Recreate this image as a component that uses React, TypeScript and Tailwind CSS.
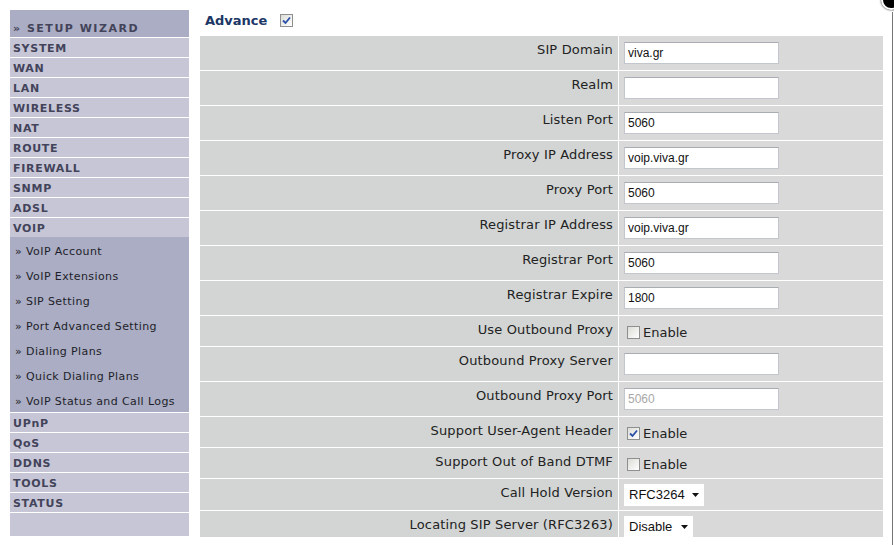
import React from 'react';

const verdana = { fontFamily: '"DejaVu Sans", Verdana, sans-serif' };
const arial = { fontFamily: '"Liberation Sans", Arial, sans-serif' };

const topMenu = ['SYSTEM', 'WAN', 'LAN', 'WIRELESS', 'NAT', 'ROUTE', 'FIREWALL', 'SNMP', 'ADSL', 'VOIP'];
const voipMenu = [
  'VoIP Account',
  'VoIP Extensions',
  'SIP Setting',
  'Port Advanced Setting',
  'Dialing Plans',
  'Quick Dialing Plans',
  'VoIP Status and Call Logs',
];
const bottomMenu = ['UPnP', 'QoS', 'DDNS', 'TOOLS', 'STATUS'];

type Row =
  | { label: string; kind: 'input'; value: string; disabled?: boolean }
  | { label: string; kind: 'check'; checked: boolean }
  | { label: string; kind: 'select'; value: string; width: string; h: string };

const rows: Row[] = [
  { label: 'SIP Domain', kind: 'input', value: 'viva.gr' },
  { label: 'Realm', kind: 'input', value: '' },
  { label: 'Listen Port', kind: 'input', value: '5060' },
  { label: 'Proxy IP Address', kind: 'input', value: 'voip.viva.gr' },
  { label: 'Proxy Port', kind: 'input', value: '5060' },
  { label: 'Registrar IP Address', kind: 'input', value: 'voip.viva.gr' },
  { label: 'Registrar Port', kind: 'input', value: '5060' },
  { label: 'Registrar Expire', kind: 'input', value: '1800' },
  { label: 'Use Outbound Proxy', kind: 'check', checked: false },
  { label: 'Outbound Proxy Server', kind: 'input', value: '' },
  { label: 'Outbound Proxy Port', kind: 'input', value: '5060', disabled: true },
  { label: 'Support User-Agent Header', kind: 'check', checked: true },
  { label: 'Support Out of Band DTMF', kind: 'check', checked: false },
  { label: 'Call Hold Version', kind: 'select', value: 'RFC3264', width: 'w-[80px]', h: 'h-[31px]' },
  { label: 'Locating SIP Server (RFC3263)', kind: 'select', value: 'Disable', width: 'w-[69px]', h: 'h-[26px]' },
];

const CheckBox = ({ checked }: { checked: boolean }) => (
  <span className="inline-flex w-[13px] h-[13px] border border-[#8e8f8f] bg-gradient-to-br from-[#dcdcd7] to-[#ffffff] items-center justify-center">
    {checked && (
      <svg width="9" height="9" viewBox="0 0 9 9">
        <path d="M1 4.5 L3.5 7 L8 1.5" fill="none" stroke="#2a4fa8" strokeWidth="1.8" />
      </svg>
    )}
  </span>
);

const Field = ({ row }: { row: Row }) => {
  if (row.kind === 'input') {
    return (
      <div className="h-[34px] flex items-center">
        <div
          className={`w-[155px] h-[22px] bg-white border border-[#c3c6cc] border-t-[#a9acb2] flex items-center pl-[3px] text-[12px] ${
            row.disabled ? 'text-[#a8a8a8]' : 'text-[#111]'
          }`}
          style={arial}
        >
          {row.value}
        </div>
      </div>
    );
  }
  if (row.kind === 'check') {
    return (
      <div className="h-[30px] flex items-center pt-[3px] gap-[3px]">
        <span className="ml-[3px] flex"><CheckBox checked={row.checked} /></span>
        <span className="text-[13px] text-[#222] leading-[16px]" style={verdana}>Enable</span>
      </div>
    );
  }
  return (
    <div className={`${row.h} pt-[5px]`}>
      <div
        className={`${row.width} h-[22px] bg-white flex items-center justify-between pl-[5px] pr-[5px] text-[13px] text-[#111]`}
        style={arial}
      >
        <span>{row.value}</span>
        <svg width="7" height="4" viewBox="0 0 7 4">
          <path d="M0 0 H7 L3.5 4 Z" fill="#111" />
        </svg>
      </div>
    </div>
  );
};

export default function App() {
  return (
    <div className="w-[894px] h-[545px] bg-white relative overflow-hidden flex">
      {/* left navigation */}
      <div className="ml-[10px] mt-[10px] w-[179px] h-[526px] flex flex-col bg-[#c6c6d6]" style={verdana}>
        <div className="h-[27px] bg-[#aaadc3] flex items-end pl-[3px] text-[11px] font-bold tracking-[1.5px] text-[#43435a]">
          » SETUP WIZARD
        </div>
        {topMenu.map((m) => (
          <div key={m} className="border-t border-white h-[20px] flex items-center pl-[3px] pt-[3px] text-[11px] font-bold tracking-[0.7px] text-[#43435a]">
            {m}
          </div>
        ))}
        <div className="bg-[#aaadc3] flex flex-col">
          {voipMenu.map((m) => (
            <div key={m} className="h-[25px] flex items-center pl-[5px] pt-[5px] text-[11px] tracking-[0.4px] text-[#1e1e2a]">
              » {m}
            </div>
          ))}
        </div>
        {bottomMenu.map((m) => (
          <div key={m} className="border-t border-white h-[20px] flex items-center pl-[3px] pt-[3px] text-[11px] font-bold tracking-[0.7px] text-[#43435a]">
            {m}
          </div>
        ))}
        <div className="border-t border-white flex-1" />
      </div>

      {/* main */}
      <div className="ml-[11px] w-[683px] flex flex-col">
        <div className="h-[36px] flex items-start pt-[13px] pl-[5px] gap-[13px]">
          <span className="text-[13px] font-bold leading-[16px] text-[#1c3765]" style={verdana}>Advance</span>
          <span className="mt-[1px] flex"><CheckBox checked /></span>
        </div>
        <div className="flex flex-col" style={verdana}>
          {rows.map((r, i) => (
            <div key={r.label} className={`flex ${i < rows.length - 1 ? 'border-b border-white' : ''}`}>
              <div className="w-[418px] bg-[#d2d5d4] text-right pr-[5px] pt-[6px] text-[13px] leading-[16px] tracking-[0.15px] text-[#222]">
                {r.label}
              </div>
              <div className="flex-1 border-l border-white bg-[#d9d9d9] pl-[5px]">
                <Field row={r} />
              </div>
            </div>
          ))}
        </div>
      </div>

      {/* close button peeking in the corner */}
      <div className="absolute left-[881px] top-[-10px] w-[20px] h-[20px] rounded-full bg-black border-2 border-white shadow-[0_0_2px_#000]" />
      <div className="absolute left-[892px] top-[12px] w-[1px] h-[533px] bg-[#777]" />
    </div>
  );
}
